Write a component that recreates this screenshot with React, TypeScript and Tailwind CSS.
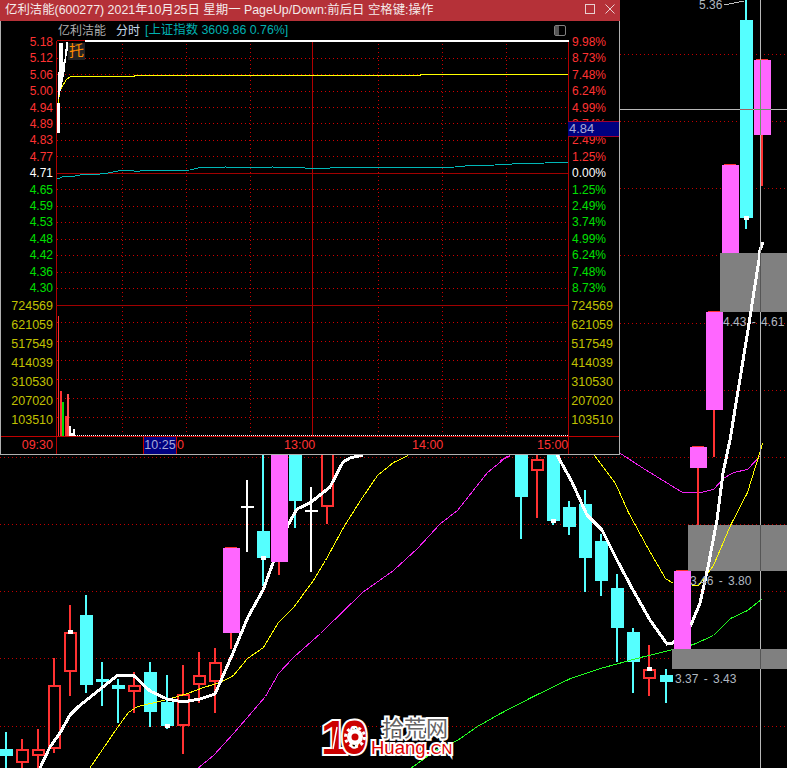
import React from "react";

type C = [number, number, number, number, number, string];
// x, wickTop, wickBottom, bodyTop, bodyBottom, kind
const plain: C[] = [
  [6,732,768,749,756,"c"],[22,739,768,749,763,"r"],[38,729,768,749,756,"r"],[54,658,753,685,749,"r"],
  [70,605,696,632,672,"r"],[86,595,693,615,685,"c"],[102,662,706,679,682,"c"],[118,679,723,685,689,"c"],
  [134,672,713,685,692,"r"],[150,662,727,672,712,"c"],[167,675,729,702,726,"c"],[183,665,754,694,726,"r"],
  [199,652,703,675,685,"r"],[215,648,713,662,682,"r"],[263,455,586,531,558,"c"],[295,455,528,455,501,"c"],
  [327,455,524,448,507,"r"],[521,455,539,455,497,"c"],[537,455,518,459,471,"r"],[553,455,525,455,521,"c"],
  [569,501,535,507,527,"c"],[585,490,592,504,558,"c"],[601,534,596,541,581,"c"],[617,574,662,588,628,"c"],
  [633,628,693,632,662,"c"],[649,645,696,669,679,"r"],[666,669,703,675,682,"c"],[746,0,229,20,218,"c"],
];
const magenta: [number, number, number, number][] = [
  [231,548,633,649],[279,455,562,575],[682,571,649,649],[698,447,468,525],[714,312,410,457],[730,165,253,253],[762,60,135,186],
];
const dots: [number,number][] = [[70,632],[167,726],[263,558],[553,521],[649,669],[746,218]];
const whiteCross: [number,number,number,number][] = [[247,480,552,507],[311,487,572,511]];

const ma5a = "40,768 50,747 60,733 70,715 78,707 93,695 118,675 133,675 150,691 167,699 183,702 200,699 215,694 233,653 248,617 263,590 273,563 288,525 297,509 310,503 330,487 343,462 350,458 363,455";
const ma5b = "557,455 572,482 587,515 602,530 617,560 633,590 650,620 667,644 673,643 691,625";
const ma5c = "691,625 700,603 708,567 717,520 723,473 730,440 748,330 755,285 759,260 760,250 763,242";
const ma10a = "89,768 100,752 117,727 128,712 137,706 150,703 167,699 187,693 203,687 220,682 233,675 247,658 263,647 278,622 293,607 313,580 325,560 343,527 360,500 377,475 393,462 408,455";
const ma10b = "594,455 615,483 628,512 647,547 665,578 673,583";
const ma10c = "691,585 698,585 713,565 730,525 747,492 760,450 762,443";
const ma20a = "197,768 213,755 233,733 265,696 278,673 293,657 320,633 362,592 393,570 417,548 440,523 457,510 487,472 508,455";
const ma20c = "620,453 643,468 682,492 700,492 713,489 723,478 733,472 747,469 760,455";
const ma60 = "410,768 438,748 457,740 477,726 500,713 533,696 570,678 600,668 640,657 673,649 693,644 713,635 730,618 747,610 762,598";

function Candles() {
  return (
    <svg className="absolute inset-0" width={787} height={768} shapeRendering="crispEdges">
      {[54.5,121.5,188.5,255.5,323.5,390.5,457.5,524.5,591.5,658.5,726.5].map(y => (
        <line key={y} x1={0} x2={787} y1={y} y2={y} stroke="#c00000" strokeDasharray="1 3" />
      ))}
      {plain.map(([x,wt,wb,bt,bb,k],i) => {
        const col = k==="c" ? "#55ffff" : "#ff3232";
        return (
          <g key={i}>
            <rect x={x-1} y={wt} width={2} height={wb-wt} fill={col} />
            {k==="c"
              ? <rect x={x-6.5} y={bt} width={13} height={bb-bt} fill={col} />
              : <rect x={x-5.5} y={bt+1} width={11} height={bb-bt-2} fill="#000" stroke={col} strokeWidth={2} />}
          </g>
        );
      })}
      {whiteCross.map(([x,t,b,m]) => (
        <g key={x}>
          <rect x={x-1} y={t} width={2} height={b-t} fill="#fff" />
          <rect x={x-6} y={m-1} width={13} height={2} fill="#fff" />
        </g>
      ))}
      <g fill="none" transform="translate(0.5 0.5)">
        <polyline points={ma60} stroke="#22ff22" strokeWidth={1} />
        <polyline points={ma20a} stroke="#ee22ee" strokeWidth={1} />
        <polyline points="500,460 510,455" stroke="#ee22ee" strokeWidth={1} />
        <polyline points={ma20c} stroke="#ee22ee" strokeWidth={1} />
        <polyline points={ma10a} stroke="#ffff00" strokeWidth={1} />
        <polyline points={ma10b} stroke="#ffff00" strokeWidth={1} />
      </g>
      <g fill="none">
        <polyline points={ma5a} stroke="#fff" strokeWidth={3} />
        <polyline points={ma5b} stroke="#fff" strokeWidth={3} />
      </g>
      {magenta.map(([x,t,b,w]) => (
        <g key={x}>
          <rect x={x-1} y={b} width={2} height={w-b} fill="#ff3232" />
          <rect x={x-6} y={t-1} width={12} height={1} fill="#ff3232" />
          <rect x={x-8.5} y={t} width={17} height={b-t} fill="#ff66ff" />
        </g>
      ))}
      {dots.map(([x,y]) => <rect key={x} x={x-2} y={y-2} width={5} height={4} fill="#fff" />)}
      <rect x={720} y={253} width={67} height={59} fill="#808080" />
      <rect x={688} y={525} width={99} height={46} fill="#808080" />
      <rect x={672} y={649} width={115} height={20} fill="#808080" />
      <g fill="none">
        <polyline points={ma10c} stroke="#ffff00" strokeWidth={1} transform="translate(0.5 0.5)" />
        <polyline points={ma5c} stroke="#fff" strokeWidth={3} />
        <polyline points="724,5 744,1" stroke="#c0c0c0" strokeWidth={1} />
      </g>
      <line x1={620} x2={787} y1={109.5} y2={109.5} stroke="#b8b8b8" />
      <line x1={760.5} x2={760.5} y1={0} y2={768} stroke="#b8b8b8" />
      <line x1={760.5} x2={760.5} y1={253} y2={312} stroke="#555" />
      <line x1={760.5} x2={760.5} y1={525} y2={571} stroke="#555" />
      <line x1={760.5} x2={760.5} y1={649} y2={669} stroke="#555" />
      <line x1={760.5} x2={760.5} y1={60} y2={135} stroke="#669966" />
      <line x1={754} x2={771} y1={109.5} y2={109.5} stroke="#669966" />
      <line x1={740} x2={753} y1={109.5} y2={109.5} stroke="#a06060" />
    </svg>
  );
}

const prices = ["5.18","5.12","5.06","5.00","4.94","4.89","4.83","4.77","4.71","4.65","4.59","4.53","4.48","4.42","4.36","4.30"];
const pcts = ["9.98%","8.73%","7.48%","6.24%","4.99%","3.74%","2.49%","1.25%","0.00%","1.25%","2.49%","3.74%","4.99%","6.24%","7.48%","8.73%"];
const vols = ["724569","621059","517549","414039","310530","207020","103510"];

function labelColor(i: number) {
  return i < 8 ? "text-[#ff3232]" : i === 8 ? "text-white" : "text-[#00e000]";
}

function Intraday() {
  const xs = [122,186,250,378,442,506];
  const priceY = [58,74,91,107,123,140,156,189,206,222,239,255,272,288];
  const volY = [322,341,360,379,398,417];
  return (
    <svg width={513} height={414} viewBox="56 40 513 414" className="block" shapeRendering="crispEdges">
      {priceY.concat(volY).map(y => (
        <line key={y} x1={57} x2={568} y1={y+0.5} y2={y+0.5} stroke="#d00000" strokeDasharray="1 3" />
      ))}
      {xs.map(x => (
        <g key={x}>
          <line x1={x+0.5} x2={x+0.5} y1={44} y2={303} stroke="#d00000" strokeDasharray="1 3" />
          <line x1={x+0.5} x2={x+0.5} y1={307} y2={435} stroke="#d00000" strokeDasharray="1 3" />
        </g>
      ))}
      <line x1={312.5} x2={312.5} y1={41} y2={436} stroke="#b00000" />
      <line x1={56.5} x2={56.5} y1={41} y2={454} stroke="#b00000" />
      <line x1={568.5} x2={568.5} y1={40} y2={454} stroke="#b00000" />
      <line x1={56} x2={568} y1={173.5} y2={173.5} stroke="#a00000" />
      <line x1={56} x2={568} y1={305.5} y2={305.5} stroke="#a00000" />
      <line x1={56} x2={569} y1={436.5} y2={436.5} stroke="#c00000" />
      <rect x={57} y={40} width={512} height={1} fill="#b00000" />
      <rect x={85} y={40} width={484} height={2} fill="#fff" />
      <g fill="none">
        <polyline points="57,178 60,178 62,177 65,176.5 68,177 75,176 85,174 92,175 108,173 118,171 130,170 134,171 140,171 150,170 160,170.5 190,170 200,167.5 215,168 225,167 260,168 272,167 290,167.5 320,168.5 340,167.5 375,168 420,167.5 455,167 470,165.5 495,165 520,163.5 545,163 568,162" stroke="#00b8b8" />
        <polyline points="58,104 60,91 62,87 66,80 70,77 75,76.5 134,76.5 134,75.5 420,75.5 420,74.5 568,74.5" stroke="#ffff00" />
      </g>
      <polygon points="57,103 60,103 60,133 57,133" fill="#fff" />
      <polygon points="59,43 63,43 63,64 65,57 66,42 68,42 68,49 66,58 65,69 62,85 60,93 58,101" fill="#fff" />
      <rect x={57.5} y={316} width={1.5} height={120} fill="#ff3232" />
      <rect x={60} y={391} width={1.5} height={45} fill="#ff3232" />
      <rect x={62} y={402} width={1.5} height={34} fill="#00e000" />
      <rect x={65} y={416} width={1.5} height={20} fill="#ff3232" />
      <rect x={67} y={394} width={1.5} height={42} fill="#ff5050" />
      <rect x={69} y={426} width={1.5} height={10} fill="#fff" />
      <rect x={71} y={433} width={1.5} height={3} fill="#fff" />
      <rect x={73} y={429} width={1.5} height={7} fill="#fff" />
      <line x1={75} x2={568} y1={435.5} y2={435.5} stroke="#fff" strokeDasharray="1 1" />
    </svg>
  );
}

function Popup() {
  return (
    <div className="absolute left-0 top-0 w-[620px] h-[455px] flex flex-col font-['Liberation_Sans','Noto_Sans_CJK_SC',sans-serif]">
      <div className="h-[21px] shrink-0 bg-[#b53138] flex items-start pl-[5px] pr-[5px] text-[12.4px] leading-[20px] text-[#f4eaea] whitespace-nowrap">
        <span className="flex-1">亿利洁能(600277) 2021年10月25日 星期一 PageUp/Down:前后日 空格键:操作</span>
        <div className="w-[10px] h-[10px] mt-[4px] border border-[#e8d0d0] mr-[10px]" />
        <svg width={10} height={10} viewBox="0 0 10 10" className="mt-[4px]"><path d="M0.5 0.5L9.5 9.5M9.5 0.5L0.5 9.5" stroke="#e8d0d0" fill="none" /></svg>
      </div>
      <div className="flex-1 min-h-0 flex flex-col bg-black border-l border-r border-b border-[#b0b0b0]">
        <div className="h-[19px] shrink-0 flex items-center pl-[57px] pr-[53px] text-[12px] whitespace-nowrap">
          <span className="text-[#b0b0b0]">亿利洁能</span>
          <span className="text-[#c8d8e8] ml-[10px]">分时</span>
          <span className="text-[#00b0b0] ml-[5px] text-[12.4px]">[上证指数 3609.86 0.76%]</span>
          <div className="ml-auto w-[12px] h-[11px] rounded-[2px] border border-[#808080] bg-black flex">
            <div className="w-[4px] h-full bg-[#555]" />
          </div>
        </div>
        <div className="flex-1 relative flex min-h-0">
          <div className="w-[55px] shrink-0 flex flex-col items-end pr-[3px] text-[12px] leading-[16.4px]">
            <div className="flex flex-col items-end -mt-[6px]">
              {prices.map((p,i) => <div key={p} className={labelColor(i)}>{p}</div>)}
            </div>
            <div className="flex flex-col items-end text-[12.5px] text-[#c0c000] leading-[19px]">
              {vols.map(v => <div key={v}>{v}</div>)}
            </div>
            <div className="mt-auto h-[18px] border-t border-[#c00000] w-[55px] -mr-[3px] pr-[3px] flex items-center justify-end text-[#ff3232] text-[12.5px]">09:30</div>
          </div>
          <Intraday />
          <div className="w-[50px] shrink-0 flex flex-col text-[12px] leading-[16.4px]">
            <div className="-mt-[6px] pl-[3px]">
              {pcts.map((p,i) => <div key={i} className={labelColor(i)}>{p}</div>)}
            </div>
            <div className="flex flex-col items-end w-[44px] text-[12.5px] text-[#c0c000] leading-[19px]">
              {vols.map(v => <div key={v}>{v}</div>)}
            </div>
            <div className="mt-auto h-[18px] border-t border-[#c00000]" />
          </div>
          <div className="absolute left-[567px] top-[81px] w-[51px] h-[16px] bg-[#000080] border-y border-[#a00030] flex items-center pl-[1px] text-[13px] text-[#a8a8d8]">4.84</div>
          <div className="absolute left-[67px] top-[3px] w-[17px] h-[17px] bg-[#222] flex items-center justify-center text-[15px] text-[#ff8c00]">托</div>
          <div className="absolute left-[55px] right-[50px] bottom-0 h-[17px] leading-[17px] text-[12.5px] text-[#ff3232]">
            <span className="absolute left-[121px]">0</span>
            <span className="absolute left-[228px]">13:00</span>
            <span className="absolute left-[356px]">14:00</span>
            <span className="absolute left-[481px]">15:00</span>
            <span className="absolute left-[87px] w-[34px] h-full bg-[#000080] border-x border-[#c00000] flex items-center justify-center text-[#a8a8d8]">10:25</span>
          </div>
        </div>
      </div>
    </div>
  );
}

function Logo() {
  const stroke = "[paint-order:stroke] [-webkit-text-stroke:4px_white]";
  return (
    <div className="absolute left-[323px] top-[714px] w-[136px] h-[50px] font-['Liberation_Sans',sans-serif]">
      <span className={`absolute left-[59px] top-[1px] text-[22px] leading-none text-[#666] font-['Noto_Sans_CJK_SC',sans-serif] whitespace-nowrap ${stroke}`}>拾荒网</span>
      <span className={`absolute left-[-2px] top-[0px] text-[48px] font-bold leading-none text-[#cc0000] ${stroke}`}>1</span>
      <span className={`absolute left-[18px] top-[0px] text-[48px] font-bold leading-none text-[#cc0000] ${stroke}`}>0</span>
      <svg className="absolute left-[7px] top-[11px]" width={10} height={26} viewBox="0 0 10 26">
        <path d="M7 2L3 24" stroke="#fff" strokeWidth={1.5} fill="none" />
      </svg>
      <svg className="absolute left-[21px] top-[12px]" width={22} height={22} viewBox="0 0 22 22">
        <circle cx={11} cy={11} r={8} fill="#fff" />
        <circle cx={11} cy={11} r={9.5} fill="none" stroke="#fff" strokeWidth={3} strokeDasharray="3 2.97" />
        <circle cx={11} cy={11} r={3.5} fill="#cc0000" />
      </svg>
      <span className={`absolute left-[48px] top-[25px] text-[18.5px] leading-none text-[#dd0000] whitespace-nowrap ${stroke}`}>
        Huang.<span className="text-[15px]">CN</span>
      </span>
    </div>
  );
}

export default function App() {
  const note = "absolute text-[12px] leading-[16px] text-[#b0b8c0] whitespace-nowrap [word-spacing:2px]";
  return (
    <div className="relative w-[787px] h-[768px] bg-black overflow-hidden font-['Liberation_Sans',sans-serif]">
      <Candles />
      <Popup />
      <span className="absolute left-[699px] top-0 text-[12px] leading-[10px] text-[#b0b8c0]">5.36</span>
      <span className={`${note} left-[723px] top-[314px]`}>4.43 - 4.61</span>
      <span className={`${note} left-[690px] top-[573px]`}>3.46 - 3.80</span>
      <span className={`${note} left-[675px] top-[671px]`}>3.37 - 3.43</span>
      <Logo />
    </div>
  );
}
